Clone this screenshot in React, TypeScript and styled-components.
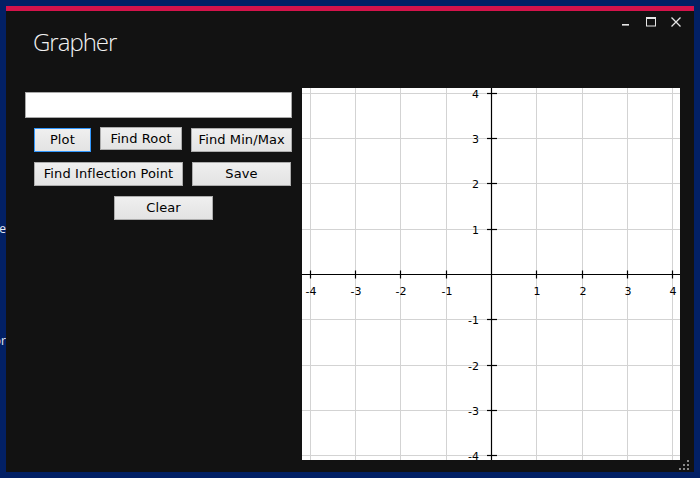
import React from "react";
import styled, { createGlobalStyle } from "styled-components";

const GlobalStyle = createGlobalStyle`
  html, body { margin: 0; padding: 0; }
  body { background: #022065; overflow: hidden; }
`;

const Desktop = styled.div`
  position: relative;
  width: 700px;
  height: 478px;
  background: #022065;
  padding: 6px 0 0 6px;
  box-sizing: border-box;
`;

const DesktopLabel = styled.div<{ $top: number }>`
  position: absolute;
  left: 0;
  top: ${(p) => p.$top}px;
  width: 6px;
  overflow: hidden;
  display: flex;
  justify-content: flex-end;
  white-space: nowrap;
  color: #e8ecf5;
  font: 12px "Open Sans", "DejaVu Sans", sans-serif;
  line-height: 14px;
`;

const Window = styled.div`
  width: 688px;
  height: 466px;
  background: #121212;
  border-top: 5px solid #d4134b;
  box-sizing: border-box;
  display: flex;
  flex-direction: column;
`;

const TitleBar = styled.div`
  height: 77px;
  display: flex;
  align-items: flex-start;
  flex-shrink: 0;
`;

const Title = styled.div`
  margin: 16px 0 0 27px;
  color: #f2f2f2;
  font-family: "Open Sans", "Noto Sans", sans-serif;
  font-weight: 300;
  font-size: 24px;
  line-height: 30px;
  letter-spacing: -1px;
`;

const Controls = styled.div`
  margin: 6px 13px 0 auto;
  display: flex;
  gap: 15px;
`;

const ControlIcon = styled.svg`
  display: block;
  width: 10px;
  height: 10px;
`;

const Content = styled.div`
  display: flex;
  align-items: flex-start;
  height: 372px;
  flex-shrink: 0;
`;

const LeftPanel = styled.div`
  width: 267px;
  margin-left: 19px;
  padding-top: 4px;
  display: flex;
  flex-direction: column;
  gap: 10px;
`;

const Input = styled.input`
  width: 267px;
  height: 26px;
  box-sizing: border-box;
  border: 1px solid #a9a9a9;
  background: #ffffff;
  margin: 0;
  padding: 0 4px;
  font: 13px "DejaVu Sans", sans-serif;
  outline: none;
`;

const ButtonRow = styled.div<{ $indent: number }>`
  display: flex;
  align-items: flex-start;
  gap: 9px;
  padding-left: ${(p) => p.$indent}px;
`;

const Button = styled.button<{ $w: number; $focused?: boolean; $raise?: boolean }>`
  width: ${(p) => p.$w}px;
  height: ${(p) => (p.$raise ? 23 : 24)}px;
  margin-top: ${(p) => (p.$raise ? -1 : 0)}px;
  box-sizing: border-box;
  padding: 0;
  border: 1px solid ${(p) => (p.$focused ? "#3399ff" : "#adadad")};
  background: linear-gradient(#efefef, #e3e3e3);
  color: #000;
  font-family: "DejaVu Sans", sans-serif;
  font-size: 13px;
  letter-spacing: 0.1px;
  line-height: 20px;
  text-align: center;
  cursor: default;
`;

const GraphPanel = styled.div`
  width: 378px;
  height: 372px;
  margin-left: 10px;
  background: #ffffff;
  overflow: hidden;
`;

const Grip = styled.svg`
  display: block;
  width: 11px;
  height: 11px;
  margin: 0 0 0 auto;
`;

const BottomBar = styled.div`
  flex: 1;
  display: flex;
  align-items: flex-end;
  padding: 0 4px 4px 0;
`;

const W = 378;
const H = 372;
const CX = 189;
const CY = 186;
const U = 45.3;
const ks = [-4, -3, -2, -1, 1, 2, 3, 4];

function Graph() {
  return (
    <svg width={W} height={H} viewBox={`0 0 ${W} ${H}`} style={{ display: "block" }}>
      <g stroke="#d3d3d3" strokeWidth={1}>
        {ks.map((k) => {
          const x = Math.round(CX + k * U) + 0.5;
          return <line key={"v" + k} x1={x} y1={0} x2={x} y2={H} />;
        })}
        {ks.map((k) => {
          const y = Math.round(CY - k * U) + 0.5;
          return <line key={"h" + k} x1={0} y1={y} x2={W} y2={y} />;
        })}
      </g>
      <g stroke="#000" strokeWidth={1.2}>
        <line x1={0} y1={CY + 0.5} x2={W} y2={CY + 0.5} />
        <line x1={CX + 0.5} y1={0} x2={CX + 0.5} y2={H} />
        {ks.map((k) => {
          const x = Math.round(CX + k * U) + 0.5;
          return <line key={"tx" + k} x1={x} y1={CY - 3.5} x2={x} y2={CY + 4.5} />;
        })}
        {ks.map((k) => {
          const y = Math.round(CY - k * U) + 0.5;
          return <line key={"ty" + k} x1={CX - 4} y1={y} x2={CX + 6} y2={y} />;
        })}
      </g>
      <g fontFamily="DejaVu Sans, sans-serif" fontSize={11} fill="#000">
        {ks.map((k) => (
          <text key={"lx" + k} x={Math.round(CX + k * U) + 1} y={CY + 21} textAnchor="middle">
            {k}
          </text>
        ))}
        {ks.map((k) => (
          <text key={"ly" + k} x={CX - 12} y={Math.round(CY - k * U) + 4.5} textAnchor="end">
            {k}
          </text>
        ))}
      </g>
    </svg>
  );
}

export default function App() {
  return (
    <>
      <GlobalStyle />
      <Desktop>
        <DesktopLabel $top={222}>Recycle</DesktopLabel>
        <DesktopLabel $top={334}>Editor</DesktopLabel>
        <Window>
          <TitleBar>
            <Title>Grapher</Title>
            <Controls>
              <ControlIcon viewBox="0 0 10 10">
                <rect x={1} y={7} width={7} height={1.6} fill="#e6e6e6" />
              </ControlIcon>
              <ControlIcon viewBox="0 0 10 10">
                <rect x={0.5} y={0.5} width={9} height={8.5} fill="none" stroke="#e6e6e6" strokeWidth={1} />
                <rect x={0} y={0} width={10} height={2} fill="#e6e6e6" />
              </ControlIcon>
              <ControlIcon viewBox="0 0 10 10">
                <path d="M0.5 0.5 L9.5 9.5 M9.5 0.5 L0.5 9.5" stroke="#e6e6e6" strokeWidth={1.3} fill="none" />
              </ControlIcon>
            </Controls>
          </TitleBar>
          <Content>
            <LeftPanel>
              <Input type="text" defaultValue="" />
              <ButtonRow $indent={9}>
                <Button $w={57} $focused>Plot</Button>
                <Button $w={83} $raise>Find Root</Button>
                <Button $w={101}>Find Min/Max</Button>
              </ButtonRow>
              <ButtonRow $indent={9}>
                <Button $w={149}>Find Inflection Point</Button>
                <Button $w={99}>Save</Button>
              </ButtonRow>
              <ButtonRow $indent={89}>
                <Button $w={99}>Clear</Button>
              </ButtonRow>
            </LeftPanel>
            <GraphPanel>
              <Graph />
            </GraphPanel>
          </Content>
          <BottomBar>
            <Grip viewBox="0 0 11 11">
              <g fill="#8a8a8a">
                <rect x={8} y={0} width={2} height={2} />
                <rect x={4} y={4} width={2} height={2} />
                <rect x={8} y={4} width={2} height={2} />
                <rect x={0} y={8} width={2} height={2} />
                <rect x={4} y={8} width={2} height={2} />
                <rect x={8} y={8} width={2} height={2} />
              </g>
            </Grip>
          </BottomBar>
        </Window>
      </Desktop>
    </>
  );
}
